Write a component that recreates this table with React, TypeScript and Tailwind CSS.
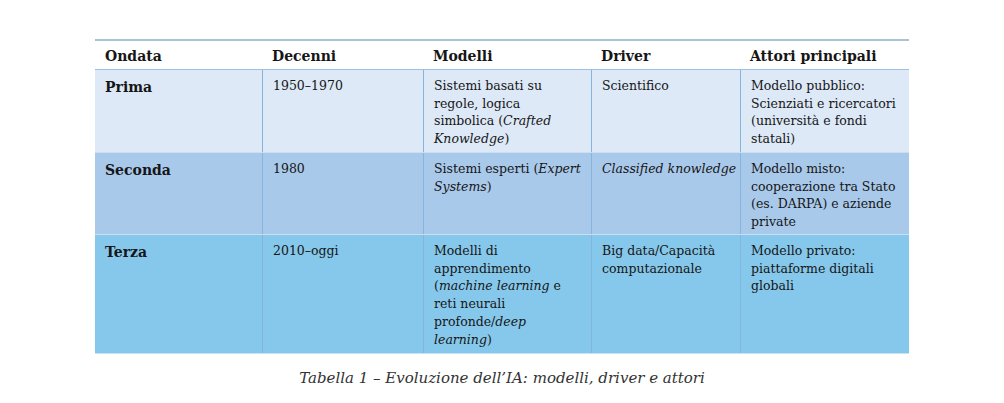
const cols = "grid grid-cols-[167px_161px_168px_149px_169px]";

type Row = {
  label: string;
  bg: string;
  h: string;
  cells: React.ReactNode[];
};

const rows: Row[] = [
  {
    label: "Prima",
    bg: "bg-[#dde9f6]",
    h: "h-[83px]",
    cells: [
      <>1950–1970</>,
      <>
        Sistemi basati su
        <br />
        regole, logica
        <br />
        simbolica (<i>Crafted</i>
        <br />
        <i>Knowledge</i>)
      </>,
      <>Scientifico</>,
      <>
        Modello pubblico:
        <br />
        Scienziati e ricercatori
        <br />
        (università e fondi
        <br />
        statali)
      </>,
    ],
  },
  {
    label: "Seconda",
    bg: "bg-[#a9c9eb]",
    h: "h-[82px]",
    cells: [
      <>1980</>,
      <>
        Sistemi esperti (<i>Expert</i>
        <br />
        <i>Systems</i>)
      </>,
      <i>Classified knowledge</i>,
      <>
        Modello misto:
        <br />
        cooperazione tra Stato
        <br />
        (es. DARPA) e aziende
        <br />
        private
      </>,
    ],
  },
  {
    label: "Terza",
    bg: "bg-[#86c8eb]",
    h: "h-[119px]",
    cells: [
      <>2010–oggi</>,
      <>
        Modelli di
        <br />
        apprendimento
        <br />(<i>machine learning</i> e
        <br />
        reti neurali
        <br />
        profonde/<i>deep</i>
        <br />
        <i>learning</i>)
      </>,
      <>
        Big data/Capacità
        <br />
        computazionale
      </>,
      <>
        Modello privato:
        <br />
        piattaforme digitali
        <br />
        globali
      </>,
    ],
  },
];

const headers = ["Ondata", "Decenni", "Modelli", "Driver", "Attori principali"];

export default function App() {
  return (
    <div className="h-[403px] w-[1004px] bg-white pt-[39px] text-[#161616] [font-family:'DejaVu_Serif','Liberation_Serif',serif]">
      <div className="mx-auto w-[814px]">
        <div className={`${cols} h-[30px] border-t-2 border-[#a9c3d6] bg-white`}>
          {headers.map((h) => (
            <div key={h} className="px-[10px] pt-[6px] text-[14px] font-bold leading-[18px]">
              {h}
            </div>
          ))}
        </div>
        {rows.map((r, i) => (
          <div
            key={r.label}
            className={`${cols} ${r.bg} ${r.h} border-t ${i === 0 ? "border-[#9fc1df]" : "border-[#c9def2]"}`}
          >
            <div className="px-[10px] pt-[8px] text-[14px] font-bold leading-[18px]">{r.label}</div>
            {r.cells.map((c, j) => (
              <div
                key={j}
                className="whitespace-nowrap border-l border-[#84b5dc] px-[10px] pt-[7px] text-[12.5px] leading-[17.7px]"
              >
                {c}
              </div>
            ))}
          </div>
        ))}
        <div className="h-px bg-[#c7e4f3]" />
      </div>
      <p className="mt-[14px] text-center text-[15px] italic leading-[20px] text-[#333]">
        Tabella 1 – Evoluzione dell’IA: modelli, driver e attori
      </p>
    </div>
  );
}
